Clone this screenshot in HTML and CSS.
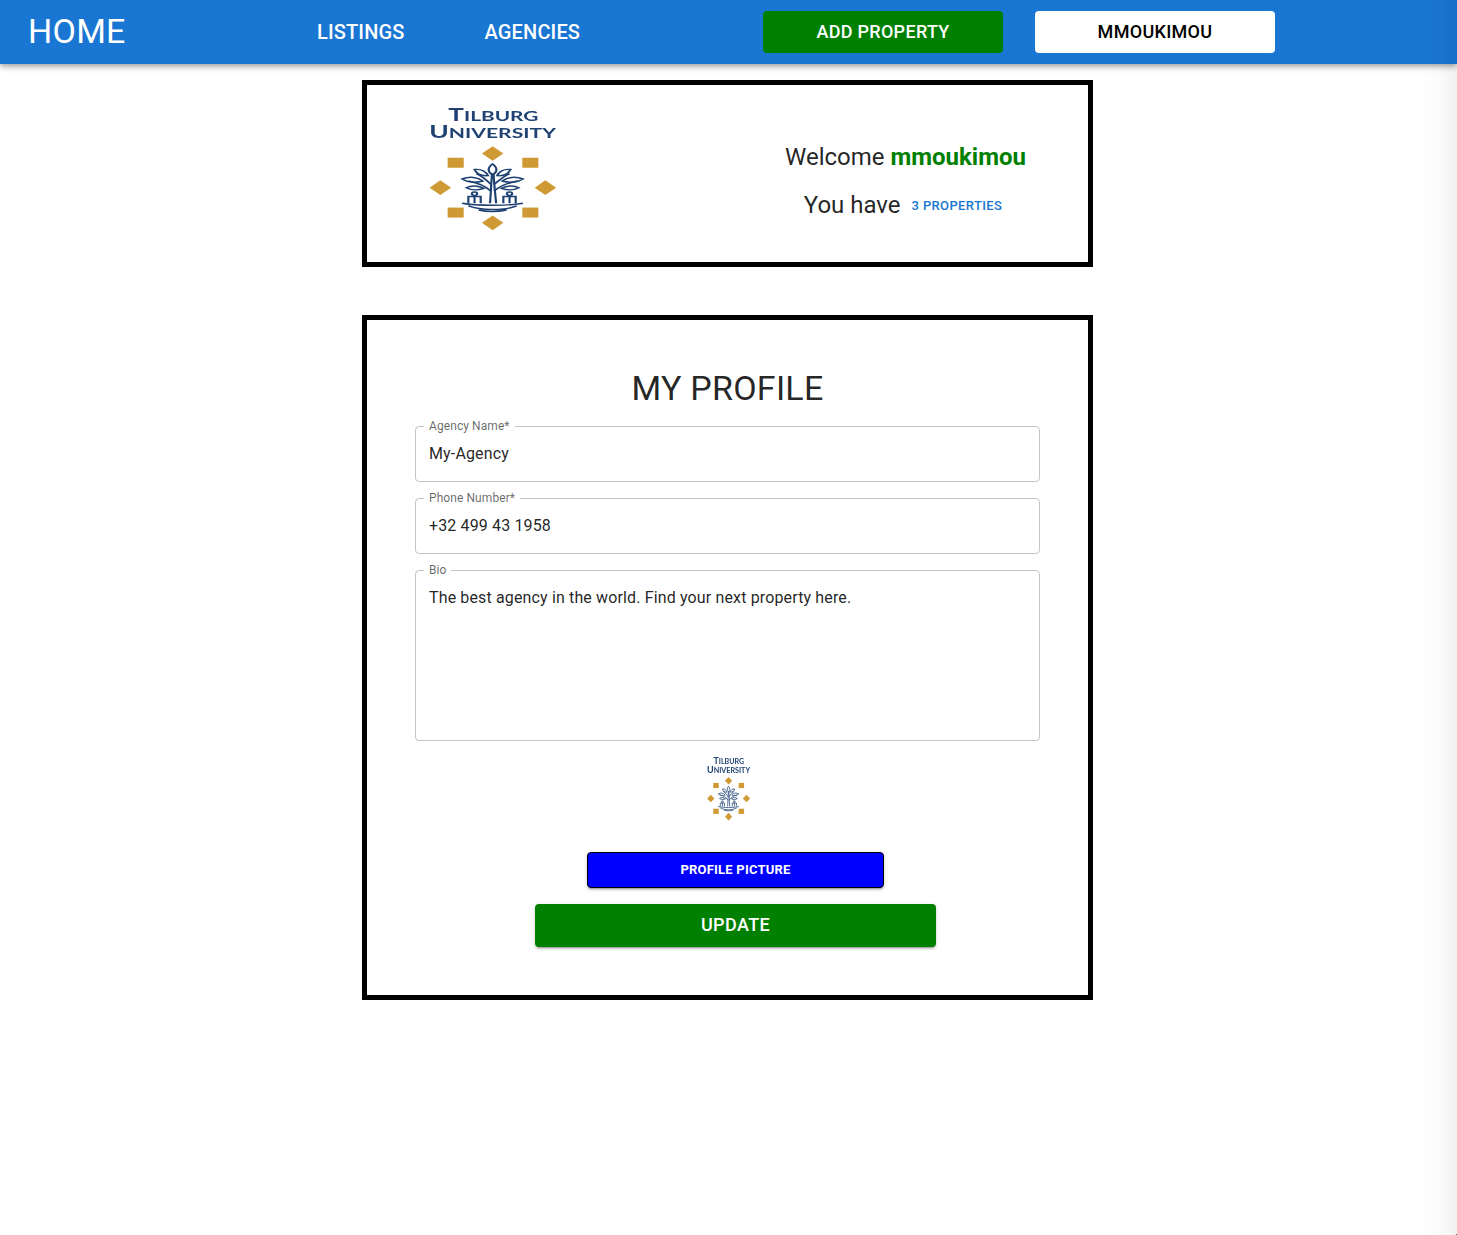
FILE: index.html
```html
<!DOCTYPE html>
<html lang="en">
<head>
<meta charset="utf-8">
<title>My Profile</title>
<link rel="stylesheet" href="styles.css">
</head>
<body>
<header class="appbar">
  <a class="brand">HOME</a>
  <nav class="nav">
    <a class="nav-link">LISTINGS</a>
    <a class="nav-link">AGENCIES</a>
  </nav>
  <div class="actions">
    <a class="bar-btn bar-btn-green">ADD PROPERTY</a>
    <a class="bar-btn bar-btn-white">MMOUKIMOU</a>
  </div>
</header>

<main class="page">
  <section class="card summary">
    <svg class="logo-large" viewBox="0 0 200 200" preserveAspectRatio="none">
      <g id="tilburg">
        <text class="logo-text" x="58.6" y="28.5" textLength="87.4" lengthAdjust="spacingAndGlyphs">T<tspan class="logo-small-cap">ilburg</tspan></text>
        <text class="logo-text" x="40" y="53.5" textLength="123" lengthAdjust="spacingAndGlyphs">U<tspan class="logo-small-cap">niversity</tspan></text>
        <g class="logo-gold">
          <path d="M101.6 65.4 112 76.3 101.6 87.2 91.2 76.3Z"/>
          <path d="M101.6 168.1 112 179 101.6 189.9 91.2 179Z"/>
          <path d="M50.8 116.1 61.2 127 50.8 137.9 40.4 127Z"/>
          <path d="M152.8 116.1 163.2 127 152.8 137.9 142.4 127Z"/>
          <rect x="57.9" y="82.6" width="15.6" height="14.8"/>
          <rect x="130.4" y="82.6" width="15.6" height="14.8"/>
          <rect x="57.9" y="156.4" width="15.6" height="14.8"/>
          <rect x="130.4" y="156.4" width="15.6" height="14.8"/>
        </g>
        <g class="logo-tree">
          <path d="M99 150C100 135 100 122 101 106M105 150C104 135 103 122 102.5 106"/>
          <path d="M100 132C95 125 88 120 78 117M103 132C108 125 115 120 126 117M100 122C96 116 92 110 86 106M103 122C108 116 112 110 118 106"/>
          <path d="M101.5 92C96 98 97 104 101.5 108 106 104 107 98 101.5 92Z"/>
          <path d="M84 100C91 99 95 103 97 109 90 110 86 106 84 100Z"/>
          <path d="M119 100C112 99 108 103 106 109 113 110 117 106 119 100Z"/>
          <path d="M72 114C79 110 87 111 92 117 85 120 77 119 72 114Z"/>
          <path d="M131 114C124 110 116 111 111 117 118 120 126 119 131 114Z"/>
          <path d="M76 127C81 123 88 124 93 128 87 131 81 131 76 127Z"/>
          <path d="M127 127C122 123 115 124 110 128 116 131 122 131 127 127Z"/>
          <path d="M78 150V140H90V150M84 140V150M112 150V140H124V150M118 140V150"/>
          <circle cx="84" cy="136" r="2.6"/>
          <circle cx="118" cy="136" r="2.6"/>
          <path d="M72 150C85 154 118 154 131 150M78 154C90 161 113 161 125 154M88 160C96 163 107 163 115 160"/>
        </g>
      </g>
    </svg>
    <div class="welcome">
      <p class="welcome-line">Welcome <strong class="username">mmoukimou</strong></p>
      <p class="count-line">You have <a class="count-link">3 PROPERTIES</a></p>
    </div>
  </section>

  <section class="card profile">
    <h1 class="title">MY PROFILE</h1>
    <fieldset class="field">
      <legend class="field-label">Agency Name*</legend>
      <div class="field-value">My-Agency</div>
    </fieldset>
    <fieldset class="field">
      <legend class="field-label">Phone Number*</legend>
      <div class="field-value">+32 499 43 1958</div>
    </fieldset>
    <fieldset class="field field-bio">
      <legend class="field-label">Bio</legend>
      <div class="field-value">The best agency in the world. Find your next property here.</div>
    </fieldset>
    <svg class="logo-small" viewBox="0 0 200 200" preserveAspectRatio="none"><use href="#tilburg"/></svg>
    <div class="form-actions">
      <button class="btn-picture" type="button">PROFILE PICTURE</button>
      <button class="btn-update" type="button">UPDATE</button>
    </div>
  </section>
</main>
<div class="edge-fade"></div>
<div class="corner-dot"></div>
</body>
</html>
```

FILE: styles.css
```css
* { box-sizing: border-box; }
html, body { margin: 0; padding: 0; }
body {
  height: 1235px;
  overflow: hidden;
  position: relative;
  background: #fff;
  color: rgba(0,0,0,.87);
  font-family: Roboto, "Liberation Sans", sans-serif;
}

.appbar {
  height: 64px;
  display: flex;
  align-items: center;
  background: #1976d2;
  color: #fff;
  padding-left: 28px;
  box-shadow: 0 2px 4px -1px rgba(0,0,0,.2), 0 4px 5px 0 rgba(0,0,0,.14), 0 1px 10px 0 rgba(0,0,0,.12);
  position: relative;
}
.brand { font-size: 34px; line-height: 1; width: 289px; letter-spacing: .25px; padding-bottom: 2px; }
.nav { display: flex; gap: 80px; width: 446px; }
.nav-link { font-size: 20px; font-weight: 500; line-height: 1; letter-spacing: .15px; }
.actions { display: flex; gap: 32px; }
.bar-btn {
  width: 240px;
  height: 42px;
  display: flex;
  align-items: center;
  justify-content: center;
  border-radius: 4px;
  padding-bottom: 1px;
  font-size: 18px;
  font-weight: 500;
  letter-spacing: .3px;
}
.bar-btn-green { background: #008000; color: #fff; }
.bar-btn-white { background: #fff; color: #000; }

.page { display: flex; flex-direction: column; align-items: center; padding: 16px 2px 0 0; gap: 48px; }
.card { width: 731px; border: 5px solid #000; background: #fff; }

.summary {
  height: 187px;
  display: grid;
  grid-template-columns: 356px 365px;
  align-items: start;
}
.logo-large { width: 206px; height: 135px; margin: 17px 0 0 21px; display: block; filter: blur(.45px); }
.welcome { text-align: center; padding-top: 58px; }
.welcome-line { margin: 0; font-size: 24px; line-height: 28px; }
.username { color: #008000; font-weight: 700; }
.count-line { margin: 20px 0 0; padding-right: 5px; font-size: 24px; line-height: 28px; }
.count-link {
  font-size: 13px;
  font-weight: 500;
  letter-spacing: .37px;
  color: #1976d2;
  margin-left: 5px;
  vertical-align: 3px;
}

.logo-text { font-family: Lato, sans-serif; font-weight: 700; font-size: 25px; fill: #1f4272; }
.logo-small-cap { font-size: 20px; text-transform: uppercase; }
.logo-gold { fill: #cf9a33; }
.logo-tree { fill: none; stroke: #1f4272; stroke-width: 2.1; }

.profile {
  height: 685px;
  padding: 43px 48px 0;
  display: flex;
  flex-direction: column;
}
.title { margin: 0 0 6px; font-size: 34px; font-weight: 400; line-height: 50px; letter-spacing: .25px; text-align: center; }
.field {
  margin: 0 0 9px;
  padding: 0 13px;
  min-width: 0;
  height: 63px;
  border: 1px solid rgba(0,0,0,.23);
  border-radius: 4px;
  flex: none;
}
.field-bio { height: 178px; margin-bottom: 0; }
.field-label {
  margin-left: -5px;
  padding: 0 5px;
  font-size: 12px;
  line-height: 14px;
  letter-spacing: .08px;
  color: rgba(0,0,0,.6);
}
.field-value { font-size: 16px; line-height: 24px; letter-spacing: .14px; padding-top: 9px; }

.logo-small { width: 70px; height: 70px; margin: 13px auto 0; display: block; flex: none; filter: blur(.35px); }

.form-actions { display: flex; flex-direction: column; align-items: center; padding-left: 16px; margin-top: 28px; gap: 16px; }
.btn-picture {
  width: 297px;
  height: 36px;
  padding: 0 0 1px;
  background: #00f;
  border: 1px solid #000;
  border-radius: 4px;
  color: #fff;
  font: 700 13px Roboto, sans-serif;
  letter-spacing: .2px;
  box-shadow: 0 3px 1px -2px rgba(0,0,0,.2), 0 2px 2px 0 rgba(0,0,0,.14), 0 1px 5px 0 rgba(0,0,0,.12);
}
.btn-update {
  width: 401px;
  height: 43px;
  padding: 0 0 2px;
  background: #008000;
  border: 0;
  border-radius: 4px;
  color: #fff;
  font: 500 18px Roboto, sans-serif;
  letter-spacing: .4px;
  box-shadow: 0 3px 1px -2px rgba(0,0,0,.2), 0 2px 2px 0 rgba(0,0,0,.14), 0 1px 5px 0 rgba(0,0,0,.12);
}

.edge-fade {
  position: absolute;
  top: 0;
  right: 0;
  bottom: 0;
  width: 36px;
  background: linear-gradient(to right, rgba(0,0,0,0), rgba(0,0,0,.02) 60%, rgba(0,0,0,.06));
  pointer-events: none;
}
.corner-dot { position: absolute; right: 0; bottom: 0; width: 1px; height: 1px; background: #555; }
```
